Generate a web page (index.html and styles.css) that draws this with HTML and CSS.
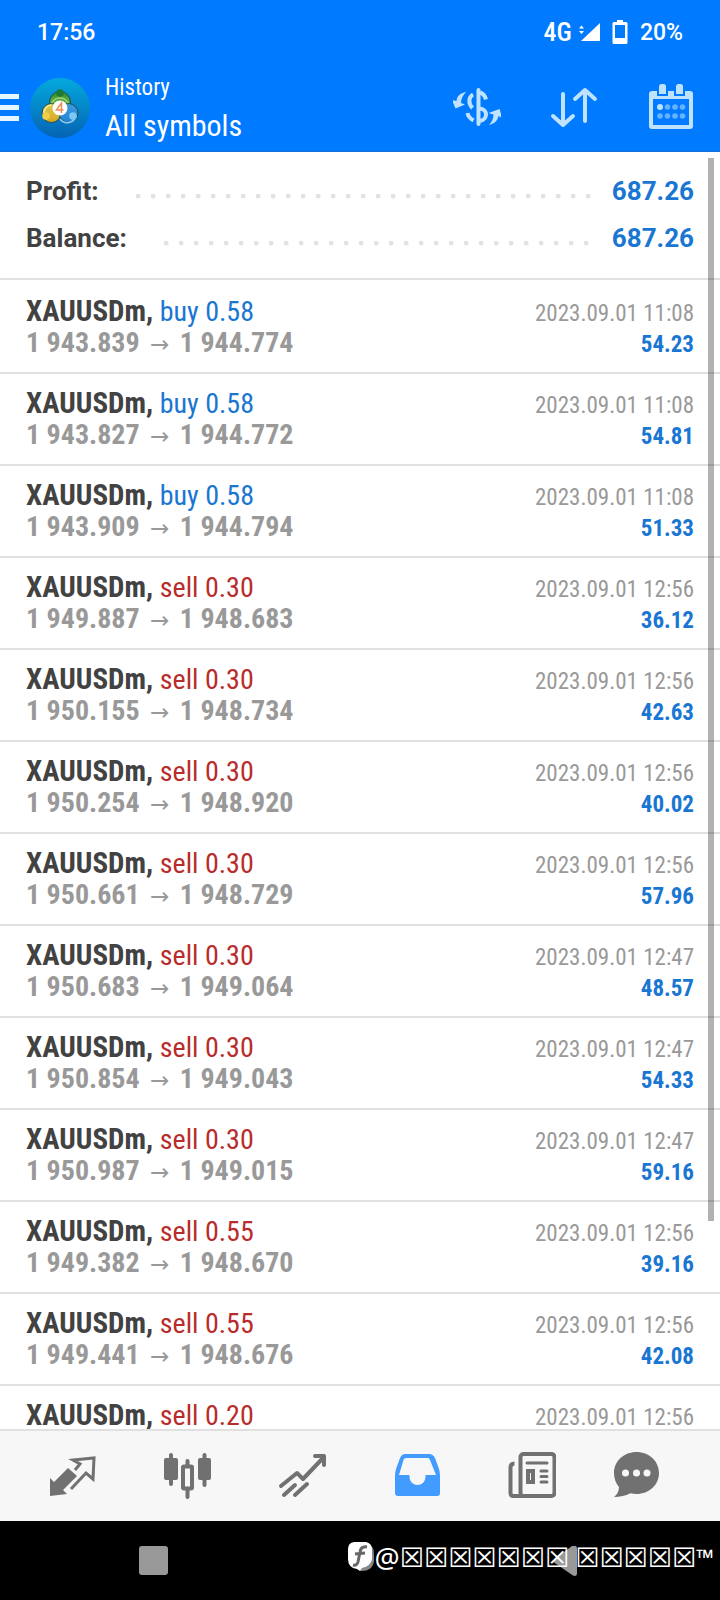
FILE: index.html
```html
<!DOCTYPE html>
<html lang="en">
<head>
<meta charset="utf-8">
<meta name="viewport" content="width=device-width, initial-scale=1">
<title>History</title>
<link rel="stylesheet" href="styles.css">
</head>
<body>
<div class="app">
  <header class="top">
    <div class="status">
      <span class="clock">17:56</span>
      <div class="status-right">
        <span class="network">4G</span>
        <svg class="signal" viewBox="0 0 22 20" aria-hidden="true"><path d="M22 1v18H3z"/><path d="M3.500 3.500l2.500 3h-5zM3.500 12l2.500-3h-5z"/></svg>
        <svg class="battery" viewBox="0 0 16 24" aria-hidden="true"><path fill-rule="evenodd" d="M5 0h6v2h3a1.500 1.500 0 0 1 1.500 1.500v19A1.500 1.500 0 0 1 14 24H2a1.500 1.500 0 0 1-1.500-1.500v-19A1.500 1.500 0 0 1 2 2h3zM3 5v13h10V5z"/></svg>
        <span class="charge">20%</span>
      </div>
    </div>
    <div class="toolbar">
      <button class="menu" aria-label="Menu"><span class="bar"></span><span class="bar"></span><span class="bar"></span></button>
      <svg class="avatar" viewBox="0 0 60 60" aria-hidden="true">
        <defs>
          <linearGradient id="disc" x1="0" y1="0" x2="0" y2="1"><stop offset="0" stop-color="#04a9dc"/><stop offset="1" stop-color="#0563b4"/></linearGradient>
          <linearGradient id="green" x1="0" y1="0" x2="0" y2="1"><stop offset="0" stop-color="#2f8a2c"/><stop offset="1" stop-color="#8ccf5a"/></linearGradient>
          <linearGradient id="gold" x1="0" y1="0" x2="0" y2="1"><stop offset="0" stop-color="#dccd55"/><stop offset="1" stop-color="#d9a51f"/></linearGradient>
          <linearGradient id="sky" x1="0" y1="0" x2="0" y2="1"><stop offset="0" stop-color="#3b9ade"/><stop offset="1" stop-color="#2484d4"/></linearGradient>
        </defs>
        <circle cx="30" cy="30" r="30" fill="url(#disc)"/>
        <g stroke="#1d4f4e" stroke-width="1">
          <circle cx="30" cy="24" r="10.500" fill="url(#green)"/>
          <circle cx="21.500" cy="35" r="9.500" fill="url(#gold)"/>
          <circle cx="38.500" cy="35" r="9.500" fill="url(#sky)"/>
        </g>
        <path d="M22 25a9 9 0 0 1 16 0" fill="none" stroke="#9bd478" stroke-width="1.500"/>
        <path d="M14 35a8 8 0 0 1 7-8" fill="none" stroke="#f2ec9c" stroke-width="1.500"/>
        <path d="M30 41a9 9 0 0 0 16-3" fill="none" stroke="#8ccbf4" stroke-width="1.500"/>
        <circle cx="30" cy="15" r="3.800" fill="#1f7a33"/>
        <circle cx="16" cy="38" r="3.800" fill="#f0cf49"/>
        <circle cx="43" cy="38" r="3.800" fill="#7dc8f4"/>
        <circle cx="30" cy="30" r="7.500" fill="#fff"/>
        <path d="M31.500 35V25l-5 7h7" fill="none" stroke="#ef8b55" stroke-width="1.500"/>
      </svg>
      <div class="titles">
        <h1 class="title">History</h1>
        <p class="subtitle">All symbols</p>
      </div>
      <div class="actions">
        <button class="action" aria-label="Currency">
          <svg viewBox="0 0 48 48" fill="none" stroke="#bfe3ff" stroke-width="4"><path d="M25.500 6v34" stroke-linecap="round"/><path d="M27 8.500c3 1 5 3 6 7"/><path d="M20 10.500c-4.500 2.500-5 9-.500 13.500"/><path d="M14.500 29c.500 3 2.500 5.500 6 7.500"/><path d="M27 24.500c8 1 8 11 0 12.500"/><path fill="#bfe3ff" stroke="none" d="M12.500 8C6 10 4 12.500 3.500 17L-1 16 2.500 24.500l9.500-4-4-1.500c0-4 1.500-7 5-11zM36 41c6.500-2 8.500-4.500 9.500-9l4 2.500-3-9.500L35.500 29l5 1.500c0 4-1.500 7-4.500 10.500z"/></svg>
        </button>
        <button class="action" aria-label="Sort">
          <svg viewBox="0 0 48 48" fill="none" stroke="#bfe3ff" stroke-width="4" stroke-linecap="round" stroke-linejoin="round"><path d="M13 10v31M3 32l10 9 10-9M35 37V6M25 15l10-9 10 9"/></svg>
        </button>
        <button class="action" aria-label="Calendar">
          <svg viewBox="0 0 48 48"><rect x="4" y="9" width="40" height="34" rx="1" fill="none" stroke="#bfe3ff" stroke-width="4"/><path d="M4 9h40v6H4z" fill="#bfe3ff"/><path d="M11 6v5h9V6M28 6v5h9V6" fill="none" stroke="#007aff" stroke-width="2"/><rect x="12" y="0" width="7" height="10" rx="2.500" fill="#bfe3ff"/><rect x="29" y="0" width="7" height="10" rx="2.500" fill="#bfe3ff"/><circle cx="13" cy="23" r="3" fill="#bfe3ff"/><g fill="#66b2ff"><circle cx="20.500" cy="23" r="2.800"/><circle cx="28" cy="23" r="2.800"/><circle cx="35.500" cy="23" r="2.800"/><circle cx="13" cy="32" r="2.800"/><circle cx="20.500" cy="32" r="2.800"/><circle cx="28" cy="32" r="2.800"/><circle cx="35.500" cy="32" r="2.800"/></g></svg>
        </button>
      </div>
    </div>
  </header>

  <main class="content">
    <dl class="summary">
      <div class="total"><dt>Profit:</dt><span class="dots"></span><dd>687.26</dd></div>
      <div class="total"><dt>Balance:</dt><span class="dots"></span><dd>687.26</dd></div>
    </dl>
    <ul class="deals">
      <li class="deal"><div class="line"><span class="symbol">XAUUSDm, <span class="buy">buy 0.58</span></span><time class="time">2023.09.01 11:08</time></div><div class="line"><span class="prices">1 943.839 <span class="arrow">→</span> 1 944.774</span><span class="profit">54.23</span></div></li>
      <li class="deal"><div class="line"><span class="symbol">XAUUSDm, <span class="buy">buy 0.58</span></span><time class="time">2023.09.01 11:08</time></div><div class="line"><span class="prices">1 943.827 <span class="arrow">→</span> 1 944.772</span><span class="profit">54.81</span></div></li>
      <li class="deal"><div class="line"><span class="symbol">XAUUSDm, <span class="buy">buy 0.58</span></span><time class="time">2023.09.01 11:08</time></div><div class="line"><span class="prices">1 943.909 <span class="arrow">→</span> 1 944.794</span><span class="profit">51.33</span></div></li>
      <li class="deal"><div class="line"><span class="symbol">XAUUSDm, <span class="sell">sell 0.30</span></span><time class="time">2023.09.01 12:56</time></div><div class="line"><span class="prices">1 949.887 <span class="arrow">→</span> 1 948.683</span><span class="profit">36.12</span></div></li>
      <li class="deal"><div class="line"><span class="symbol">XAUUSDm, <span class="sell">sell 0.30</span></span><time class="time">2023.09.01 12:56</time></div><div class="line"><span class="prices">1 950.155 <span class="arrow">→</span> 1 948.734</span><span class="profit">42.63</span></div></li>
      <li class="deal"><div class="line"><span class="symbol">XAUUSDm, <span class="sell">sell 0.30</span></span><time class="time">2023.09.01 12:56</time></div><div class="line"><span class="prices">1 950.254 <span class="arrow">→</span> 1 948.920</span><span class="profit">40.02</span></div></li>
      <li class="deal"><div class="line"><span class="symbol">XAUUSDm, <span class="sell">sell 0.30</span></span><time class="time">2023.09.01 12:56</time></div><div class="line"><span class="prices">1 950.661 <span class="arrow">→</span> 1 948.729</span><span class="profit">57.96</span></div></li>
      <li class="deal"><div class="line"><span class="symbol">XAUUSDm, <span class="sell">sell 0.30</span></span><time class="time">2023.09.01 12:47</time></div><div class="line"><span class="prices">1 950.683 <span class="arrow">→</span> 1 949.064</span><span class="profit">48.57</span></div></li>
      <li class="deal"><div class="line"><span class="symbol">XAUUSDm, <span class="sell">sell 0.30</span></span><time class="time">2023.09.01 12:47</time></div><div class="line"><span class="prices">1 950.854 <span class="arrow">→</span> 1 949.043</span><span class="profit">54.33</span></div></li>
      <li class="deal"><div class="line"><span class="symbol">XAUUSDm, <span class="sell">sell 0.30</span></span><time class="time">2023.09.01 12:47</time></div><div class="line"><span class="prices">1 950.987 <span class="arrow">→</span> 1 949.015</span><span class="profit">59.16</span></div></li>
      <li class="deal"><div class="line"><span class="symbol">XAUUSDm, <span class="sell">sell 0.55</span></span><time class="time">2023.09.01 12:56</time></div><div class="line"><span class="prices">1 949.382 <span class="arrow">→</span> 1 948.670</span><span class="profit">39.16</span></div></li>
      <li class="deal"><div class="line"><span class="symbol">XAUUSDm, <span class="sell">sell 0.55</span></span><time class="time">2023.09.01 12:56</time></div><div class="line"><span class="prices">1 949.441 <span class="arrow">→</span> 1 948.676</span><span class="profit">42.08</span></div></li>
      <li class="deal"><div class="line"><span class="symbol">XAUUSDm, <span class="sell">sell 0.20</span></span><time class="time">2023.09.01 12:56</time></div></li>
    </ul>
    <span class="scrollbar"></span>
  </main>

  <nav class="tabs">
    <button class="tab" aria-label="Quotes"><svg viewBox="0 0 48 48"><path fill="#717171" d="M20 16l9 8-14 14 4 4-17 2V26l4 4z"/><path fill="none" stroke="#717171" stroke-width="3" d="M27 18l5-6-7-4 21-2-1 21-7-6-15 16"/></svg></button>
    <button class="tab" aria-label="Chart"><svg viewBox="0 0 48 48"><g fill="#717171"><rect x="1" y="6" width="14" height="22" rx="2"/><rect x="35" y="6" width="13" height="22" rx="2"/></g><path fill="none" stroke="#717171" stroke-width="4" stroke-linecap="round" d="M8 3v29M41.500 3v30M24.500 9v5M24.500 37v8"/><rect x="20" y="14.500" width="9" height="22" rx="1" fill="none" stroke="#717171" stroke-width="4"/></svg></button>
    <button class="tab" aria-label="Trade"><svg viewBox="0 0 48 48" fill="none" stroke="#717171" stroke-width="4" stroke-linecap="round" stroke-linejoin="round"><path d="M3 34l16-13 6 6L45 6M37 4h9v9M6 43l11-10M17 43l12-11"/></svg></button>
    <button class="tab" aria-label="History"><svg viewBox="0 0 48 48"><path fill="#429bff" fill-rule="evenodd" d="M12 2h24q4 0 6 4l4 11q1 3 1 7v17q0 3-3 3H5q-3 0-3-3V24q0-4 1-7L7 6q2-4 5-4zm1 4q-2 0-2.500 2L6 23h10.500v2a8 8 0 0 0 16 0v-2H43L37 8q-.500-2-2.500-2z"/></svg></button>
    <button class="tab" aria-label="News"><svg viewBox="0 0 48 48" fill="none" stroke="#717171" stroke-width="4"><rect x="12.500" y="2" width="34" height="42" rx="3"/><path d="M6.500 11.500q-4 0-4 4V41q0 3 3 3h10"/><path stroke-width="3" stroke-linecap="round" d="M19 11h20M33 19h6M33 24.500h6M33 30h6"/><rect x="20" y="19" width="5" height="11"/></svg></button>
    <button class="tab" aria-label="Messages"><svg viewBox="0 0 48 48"><path fill="#717171" d="M24.500 0C37 0 47 9 47 21S37 42 24.500 42q-3 0-6-.800Q11 45 2 45q5-4 5-10Q2 29 2 21C2 9 12 0 24.500 0z"/><g fill="#f7f7f7"><circle cx="13.500" cy="21" r="3.500"/><circle cx="24.500" cy="21" r="3.500"/><circle cx="35" cy="21" r="3.500"/></g></svg></button>
  </nav>

  <footer class="system">
    <button class="recents" aria-label="Recent apps"></button>
    <button class="back" aria-label="Back"><svg viewBox="0 0 30 30"><path fill="#999" d="M1 13.500 19 0q5-2 5 3v24q0 4-4 2.500L1 16.500z"/></svg></button>
    <div class="watermark">
      <svg class="badge" viewBox="0 0 28 32" aria-hidden="true"><path fill="#888" d="M8 4h15q4 2 4 10v6q-1 10-13 10l-6-4z"/><path fill="#fff" d="M7 1h12q6 1 6 8v9q-1 7-10 9l-2 3-3-2Q1 27 1 18V8q0-6 6-7z"/><path fill="none" stroke="#666" stroke-width="3" d="M20 6q-6-1-7 5l-2 10q-1 4-5 3M8 13l10-1"/></svg>
      <span class="at">@</span><span class="boxes">☒☒☒☒☒☒☒</span><span class="boxes">☒☒☒☒☒</span><span class="tm">™</span>
    </div>
  </footer>
</div>
</body>
</html>
```

FILE: styles.css
```css
* { box-sizing: border-box; }

body {
  margin: 0;
  font-family: "Roboto", "Noto Sans", sans-serif;
  background: #fff;
}

h1, p, dl, dd, ul { margin: 0; padding: 0; }

button {
  padding: 0;
  border: 0;
  background: none;
}

svg { display: block; }

.app {
  display: flex;
  flex-direction: column;
  height: 100vh;
}

.top {
  background: #007aff;
  border-bottom: 1px solid #1670dc;
  color: #fff;
}

.status {
  display: flex;
  justify-content: space-between;
  align-items: center;
  height: 64px;
  padding: 0 37px;
  font-size: 23px;
  font-weight: 500;
}

.status-right {
  display: flex;
  align-items: center;
}

.network {
  font-family: "Roboto Condensed", "Liberation Sans Narrow", "Roboto", sans-serif;
  font-size: 26px;
}

.signal {
  width: 22px;
  height: 20px;
  margin: 0 12px 0 6px;
  fill: #fff;
}

.battery {
  width: 16px;
  height: 24px;
  margin-right: 12px;
  fill: #fff;
}

.toolbar {
  display: flex;
  align-items: center;
  height: 87px;
  padding-right: 25px;
}

.menu {
  display: flex;
  flex-direction: column;
  gap: 6px;
  width: 19px;
  margin-right: 11px;
}

.bar {
  height: 5px;
  background: #e6f6ff;
}

.avatar {
  width: 60px;
  height: 60px;
  margin-right: 15px;
}

.titles {
  flex: 1;
  font-family: "Roboto Condensed", "Liberation Sans Narrow", "Roboto", sans-serif;
}

.title {
  font-size: 23px;
  font-weight: 400;
  line-height: 36px;
}

.subtitle {
  font-size: 30px;
  line-height: 40px;
}

.actions {
  display: flex;
  gap: 49px;
}

.action svg, .tab svg {
  width: 48px;
  height: 48px;
}

.content {
  position: relative;
  flex: 1;
  min-height: 0;
  overflow: hidden;
}

.summary {
  padding: 15px 26px 17px;
  border-bottom: 2px solid #e0e0e0;
  font-size: 26px;
}

.total {
  display: flex;
  align-items: center;
  height: 47px;
}

.total dt {
  color: #424242;
  font-weight: 700;
}

.total dd {
  color: #1976d2;
  font-weight: 700;
}

.dots {
  flex: 1;
  height: 5px;
  margin: 12px 18px 0 37px;
  background: radial-gradient(circle at 2px 2px, #e2e2e2 2px, transparent 3px) 0 0 / 15px 5px repeat-x;
}

.deals {
  padding-top: 2px;
  list-style: none;
  font-family: "Roboto Condensed", "Liberation Sans Narrow", "Roboto", sans-serif;
}

.deal {
  display: flex;
  flex-direction: column;
  gap: 4px;
  height: 92px;
  padding: 15px 26px 0;
  border-bottom: 2px solid #e0e0e0;
}

.line {
  display: flex;
  justify-content: space-between;
  align-items: baseline;
  height: 28px;
  line-height: 28px;
  white-space: nowrap;
}

.symbol {
  color: #424242;
  font-size: 29px;
  font-weight: 700;
}

.buy, .sell {
  font-size: 28px;
  font-weight: 400;
}

.buy { color: #1976d2; }
.sell { color: #b92c2c; }

.time {
  color: #999;
  font-size: 23px;
}

.prices {
  color: #999;
  font-size: 28px;
  font-weight: 700;
}

.arrow {
  margin: 0 4px;
  font-family: "Noto Sans", "DejaVu Sans", sans-serif;
  font-size: 23px;
  font-weight: 400;
}

.profit {
  color: #1976d2;
  font-size: 23px;
  font-weight: 700;
}

.scrollbar {
  position: absolute;
  top: 6px;
  right: 6px;
  bottom: 208px;
  width: 6px;
  background: rgba(0, 0, 0, 0.3);
}

.tabs {
  display: grid;
  grid-template-columns: repeat(5, 115fr) 93fr;
  align-items: center;
  justify-items: center;
  height: 92px;
  padding: 0 37px 0 14px;
  border-top: 2px solid #e0e0e0;
  background: #f7f7f7;
}

.system {
  position: relative;
  display: flex;
  align-items: center;
  justify-content: space-between;
  height: 79px;
  padding: 0 137px 0 139px;
  background: #000;
}

.recents {
  width: 29px;
  height: 29px;
  border-radius: 3px;
  background: #999;
}

.back svg {
  width: 30px;
  height: 30px;
}

.watermark {
  position: absolute;
  top: 20px;
  right: 6px;
  display: flex;
  align-items: center;
  height: 32px;
  color: #fff;
}

.badge {
  width: 28px;
  height: 32px;
}

.at {
  font-family: "Noto Sans", sans-serif;
  font-size: 28px;
}

.boxes {
  font-family: "DejaVu Sans", sans-serif;
  font-size: 27px;
}

.boxes + .boxes { margin-left: 6px; }

.tm {
  font-family: "Noto Sans", sans-serif;
  font-size: 23px;
}
```
